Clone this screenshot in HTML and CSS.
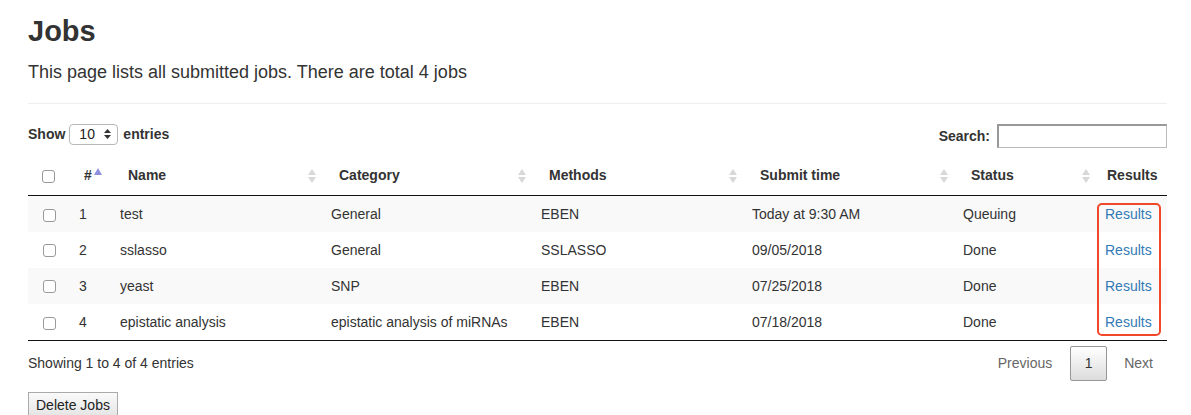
FILE: index.html
```html
<!DOCTYPE html>
<html>
<head>
<meta charset="utf-8">
<link rel="stylesheet" href="styles.css">
</head>
<body>
<div class="page">
  <h1 class="title">Jobs</h1>
  <p class="lead">This page lists all submitted jobs. There are total 4 jobs</p>
  <hr class="rule">
  <div class="toolbar">
    <label class="length">Show
      <span class="select">10<svg class="spin" width="7" height="10" viewBox="0 0 7 10"><path d="M3.5 0L7 4H0z M3.5 10L7 6H0z" fill="#333"/></svg></span>
      entries</label>
    <label class="search">Search: <span class="search-box"></span></label>
  </div>
  <div class="table-wrap">
    <table class="jobs">
      <colgroup>
        <col style="width:41px"><col style="width:41px"><col style="width:211px"><col style="width:210px"><col style="width:211px"><col style="width:211px"><col style="width:142px"><col style="width:72px">
      </colgroup>
      <thead>
        <tr>
          <th class="c-check"><span class="cb"></span></th>
          <th class="c-num">#<svg class="asc" width="8" height="7" viewBox="0 0 8 7"><path d="M4 0L8 7H0z" fill="#8f8fe0"/></svg></th>
          <th class="sortable">Name<span class="sort"></span></th>
          <th class="sortable">Category<span class="sort"></span></th>
          <th class="sortable">Methods<span class="sort"></span></th>
          <th class="sortable">Submit time<span class="sort"></span></th>
          <th class="sortable">Status<span class="sort"></span></th>
          <th class="c-res">Results</th>
        </tr>
      </thead>
      <tbody>
        <tr class="odd"><td class="c-check"><span class="cb"></span></td><td>1</td><td>test</td><td>General</td><td>EBEN</td><td>Today at 9:30 AM</td><td>Queuing</td><td><a href="#">Results</a></td></tr>
        <tr><td class="c-check"><span class="cb"></span></td><td>2</td><td>sslasso</td><td>General</td><td>SSLASSO</td><td>09/05/2018</td><td>Done</td><td><a href="#">Results</a></td></tr>
        <tr class="odd"><td class="c-check"><span class="cb"></span></td><td>3</td><td>yeast</td><td>SNP</td><td>EBEN</td><td>07/25/2018</td><td>Done</td><td><a href="#">Results</a></td></tr>
        <tr><td class="c-check"><span class="cb"></span></td><td>4</td><td>epistatic analysis</td><td>epistatic analysis of miRNAs</td><td>EBEN</td><td>07/18/2018</td><td>Done</td><td><a href="#">Results</a></td></tr>
      </tbody>
    </table>
    <div class="highlight"></div>
  </div>
  <div class="footer">
    <div class="info">Showing 1 to 4 of 4 entries</div>
    <div class="paging">
      <span class="pg-link">Previous</span>
      <span class="pg-current">1</span>
      <span class="pg-link">Next</span>
    </div>
  </div>
  <button class="delete">Delete Jobs</button>
</div>
</body>
</html>
```
FILE: styles.css
```css
html, body {
  margin: 0;
  padding: 0;
  background: #fff;
}
body {
  font-family: "Liberation Sans", Arial, sans-serif;
  font-size: 14px;
  color: #333;
}
.page {
  margin-left: 28px;
  width: 1139px;
}
.title {
  font-size: 29px;
  font-weight: bold;
  margin: 0;
  padding-top: 15px;
  line-height: 33px;
  color: #333;
}
.lead {
  font-size: 18px;
  margin: 12px 0 0;
  line-height: 24px;
}
.rule {
  border: 0;
  border-top: 1px solid #eee;
  margin: 19px 0 0;
}
.toolbar {
  display: flex;
  justify-content: space-between;
  align-items: center;
  margin-top: 19px;
  height: 26px;
}
.length, .search {
  font-weight: bold;
  display: flex;
  align-items: center;
}
.length { margin-top: -4px; }
.select {
  display: inline-flex;
  align-items: center;
  justify-content: space-between;
  box-sizing: border-box;
  width: 49px;
  height: 21px;
  margin: 0 5px 0 4px;
  padding: 0 6px 0 9px;
  border: 1px solid #b8b8b8;
  border-radius: 4px;
  font-weight: normal;
  color: #222;
  font-size: 14px;
}
.search-box {
  display: inline-block;
  width: 170px;
  height: 24px;
  box-sizing: border-box;
  margin-left: 7px;
  border: 1px solid #bbb;
  border-top-color: #999;
  border-left-color: #999;
  border-width: 2px 1px 1px 2px;
}
.table-wrap {
  position: relative;
  margin-top: 6px;
}
.jobs {
  width: 100%;
  border-collapse: collapse;
  table-layout: fixed;
}
.jobs th {
  text-align: left;
  font-weight: bold;
  padding: 0 18px;
  height: 40px;
  border-bottom: 1px solid #111;
  position: relative;
  white-space: nowrap;
}
.jobs th.c-check { padding: 0; text-align: center; }
.jobs th.c-num { padding-left: 15px; padding-right: 0; }
.jobs th.c-res { padding: 0 10px 0 12px; }
.jobs td {
  height: 36px;
  padding: 0 10px;
  box-sizing: border-box;
  white-space: nowrap;
}
.jobs td.c-check { padding: 0 0 0 15px; }
.jobs th.c-check .cb { margin-left: 0; }
.jobs tr.odd td { background: #f9f9f9; }
.jobs tbody tr:last-child td { border-bottom: 1px solid #111; height: 37px; }
.cb {
  display: inline-block;
  width: 11px;
  height: 11px;
  border: 1px solid #9a9a9a;
  border-radius: 3px;
  background: #fff;
  vertical-align: middle;
}
.asc {
  vertical-align: top;
  margin-left: 2px;
  margin-top: 1px;
}
.sort {
  position: absolute;
  right: 5px;
  top: 14px;
  width: 8px;
  height: 14px;
}
.sort::before, .sort::after {
  content: "";
  position: absolute;
  left: 0;
  border-left: 4px solid transparent;
  border-right: 4px solid transparent;
}
.sort::before { top: 0; border-bottom: 6px solid #d8d8d8; }
.sort::after { top: 8px; border-top: 6px solid #d8d8d8; }
a {
  color: #337ab7;
  text-decoration: none;
}
.highlight {
  position: absolute;
  left: 1069px;
  top: 48px;
  width: 60px;
  height: 129px;
  border: 2px solid #f2482a;
  border-radius: 5px;
}
.footer {
  display: flex;
  justify-content: space-between;
  align-items: center;
  height: 44px;
  margin-top: 0;
}
.info { font-size: 14px; margin-top: 0; }
.paging {
  display: flex;
  align-items: center;
  margin-right: 14px;
}
.pg-link {
  color: #666;
  padding: 0 18px 0 0;
}
.pg-link:last-child { padding: 0; margin-left: 17px; }
.pg-current {
  display: inline-flex;
  align-items: center;
  justify-content: center;
  box-sizing: border-box;
  width: 37px;
  height: 35px;
  border: 1px solid #979797;
  border-radius: 2px;
  background: linear-gradient(#fff, #dcdcdc);
  color: #333;
}
.delete {
  margin-top: 7px;
  font-family: "Liberation Sans", Arial, sans-serif;
  font-size: 14px;
  color: #222;
  padding: 0 7px;
  height: 26px;
  border: 1px solid #aaa;
  background: linear-gradient(#fafafa, #e4e4e4);
  border-radius: 0;
}
```
